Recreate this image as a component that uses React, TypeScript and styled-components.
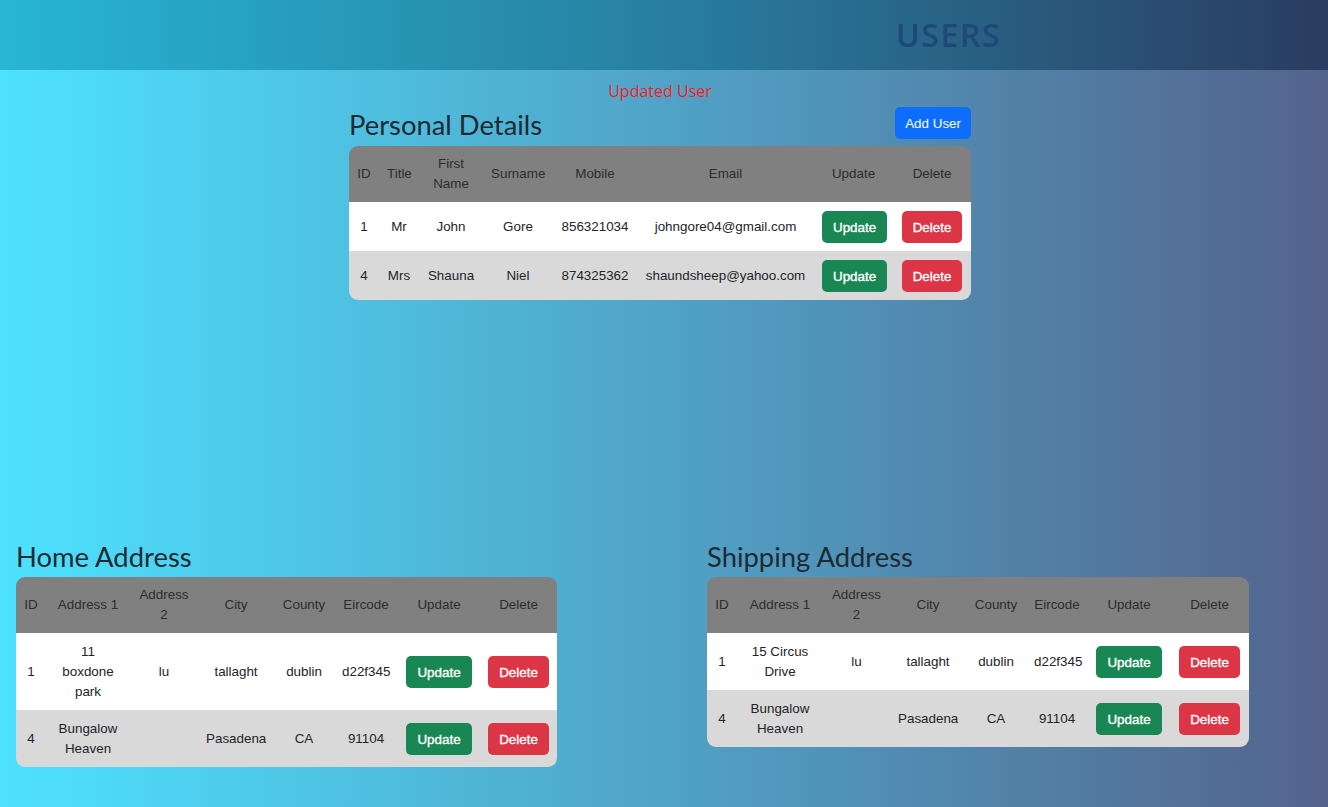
import React from "react";
import styled, { createGlobalStyle } from "styled-components";

const Global = createGlobalStyle`
  html, body { margin: 0; padding: 0; }
  body {
    min-height: 807px;
    background: linear-gradient(90deg, #4de2ff 0%, #50a3c7 50%, #54638c 100%);
    font-family: "Liberation Sans", Arial, sans-serif;
    color: #212529;
  }
`;

const Header = styled.header`
  height: 70px;
  background: linear-gradient(90deg, #27b6d4 0%, #287fa1 50%, #2a3c60 100%);
  display: flex;
  align-items: center;
  padding-left: 896px;
  box-sizing: border-box;
`;

const Title = styled.h1`
  margin: 0;
  font-family: "Open Sans", sans-serif;
  font-size: 32px;
  font-weight: 600;
  letter-spacing: 1.6px;
  color: #1e4878;
  line-height: 1;
`;

const Main = styled.main`
  display: flex;
  flex-direction: column;
`;

const Message = styled.div`
  margin-top: 9px;
  padding-right: 8px;
  text-align: center;
  font-family: "Open Sans", sans-serif;
  font-size: 16px;
  line-height: 24px;
  color: #ff1a1a;
`;

const Personal = styled.section`
  align-self: center;
  width: 622px;
  margin-right: 8px;
  margin-top: 4px;
`;

const HeadRow = styled.div`
  display: flex;
  justify-content: space-between;
  align-items: flex-end;
  margin-bottom: 7px;
`;

const Heading = styled.h3`
  margin: 0;
  font-family: Lato, "Open Sans", sans-serif;
  font-weight: 400;
  font-size: 27.4px;
  line-height: 29px;
  color: #1f2a33;
`;

const SubHeading = styled(Heading)`
  margin-bottom: 6px;
`;

const AddButton = styled.button`
  height: 32px;
  padding: 0 10px;
  border: none;
  border-radius: 5px;
  background: #0d6efd;
  color: #fff;
  font-family: "Liberation Sans", Arial, sans-serif;
  font-size: 13.4px;
`;

const Table = styled.table`
  width: 100%;
  table-layout: fixed;
  border-collapse: separate;
  border-spacing: 0;
  border-radius: 9px;
  overflow: hidden;
  font-size: 13.4px;
  line-height: 20px;
  text-align: center;
`;

const Col = styled.col<{ $w: number }>`
  width: ${(p) => p.$w}px;
`;

const Th = styled.th`
  background: #808080;
  color: #2d2d2d;
  font-weight: 400;
  padding: 8px 8px;
  vertical-align: middle;
`;

const Tr = styled.tr<{ $alt?: boolean }>`
  background: ${(p) => (p.$alt ? "#d9d9d9" : "#ffffff")};
`;

const Td = styled.td`
  padding: 8px 8px;
  vertical-align: middle;
  border-top: 1px solid transparent;
`;

const Btn = styled.button<{ $kind: "update" | "delete" }>`
  height: 32px;
  padding: 0 11px;
  border: none;
  border-radius: 5px;
  background: ${(p) => (p.$kind === "update" ? "#198754" : "#dc3545")};
  color: #fff;
  font-family: "Liberation Sans", Arial, sans-serif;
  font-size: 13.4px;
  font-weight: 400;
  -webkit-text-stroke: 0.35px #fff;
  vertical-align: middle;
`;

const Addresses = styled.div`
  display: grid;
  grid-template-columns: 541px 542px;
  column-gap: 150px;
  padding-left: 16px;
  margin-top: 242px;
  align-items: start;
`;

type Row = string[];

const DataTable = ({ widths, head, rows }: { widths: number[]; head: string[]; rows: Row[] }) => (
  <Table>
    <colgroup>
      {widths.map((w, i) => (
        <Col key={i} $w={w} />
      ))}
    </colgroup>
    <thead>
      <tr>
        {head.map((h) => (
          <Th key={h}>{h}</Th>
        ))}
      </tr>
    </thead>
    <tbody>
      {rows.map((r, i) => (
        <Tr key={i} $alt={i % 2 === 1}>
          {r.map((c, j) => (
            <Td key={j}>{c}</Td>
          ))}
          <Td>
            <Btn $kind="update">Update</Btn>
          </Td>
          <Td>
            <Btn $kind="delete">Delete</Btn>
          </Td>
        </Tr>
      ))}
    </tbody>
  </Table>
);

const addrHead = ["ID", "Address 1", "Address 2", "City", "County", "Eircode", "Update", "Delete"];

export default function App() {
  return (
    <>
      <Global />
      <Header>
        <Title>USERS</Title>
      </Header>
      <Main>
        <Message>Updated User</Message>
        <Personal>
          <HeadRow>
            <Heading>Personal Details</Heading>
            <AddButton>Add User</AddButton>
          </HeadRow>
          <DataTable
            widths={[30, 40, 64, 70, 84, 177, 79, 78]}
            head={["ID", "Title", "First Name", "Surname", "Mobile", "Email", "Update", "Delete"]}
            rows={[
              ["1", "Mr", "John", "Gore", "856321034", "johngore04@gmail.com"],
              ["4", "Mrs", "Shauna", "Niel", "874325362", "shaundsheep@yahoo.com"],
            ]}
          />
        </Personal>
        <Addresses>
          <section>
            <SubHeading>Home Address</SubHeading>
            <DataTable
              widths={[30, 84, 68, 76, 60, 64, 82, 77]}
              head={addrHead}
              rows={[
                ["1", "11 boxdone park", "lu", "tallaght", "dublin", "d22f345"],
                ["4", "Bungalow Heaven", "", "Pasadena", "CA", "91104"],
              ]}
            />
          </section>
          <section>
            <SubHeading>Shipping Address</SubHeading>
            <DataTable
              widths={[30, 86, 67, 76, 60, 62, 82, 79]}
              head={addrHead}
              rows={[
                ["1", "15 Circus Drive", "lu", "tallaght", "dublin", "d22f345"],
                ["4", "Bungalow Heaven", "", "Pasadena", "CA", "91104"],
              ]}
            />
          </section>
        </Addresses>
      </Main>
    </>
  );
}
